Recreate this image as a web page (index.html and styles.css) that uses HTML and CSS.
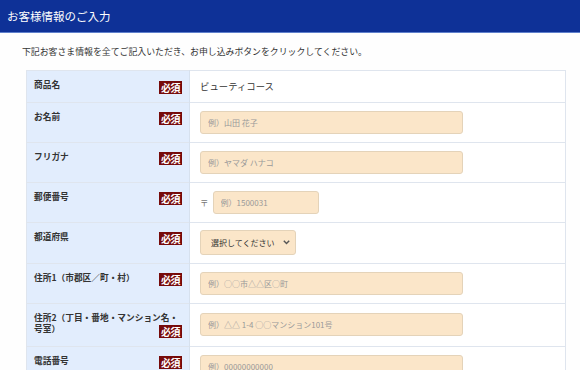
FILE: index.html
```html
<!DOCTYPE html>
<html lang="ja">
<head>
    <meta charset="UTF-8">
    <meta name="viewport" content="width=device-width, initial-scale=1.0">
    <title>お客様情報のご入力</title>
    <link rel="stylesheet" href="styles.css">
</head>
<body>
    <h1 class="page-head">お客様情報のご入力</h1>
    <p class="intro">下記お客さま情報を全てご記入いただき、お申し込みボタンをクリックしてください。</p>

    <table class="form-table">
        <tr>
            <th>商品名<span class="req">必須</span></th>
            <td class="plain">ビューティコース</td>
        </tr>
        <tr>
            <th>お名前<span class="req">必須</span></th>
            <td><input type="text" class="field" placeholder="例）山田 花子"></td>
        </tr>
        <tr>
            <th>フリガナ<span class="req">必須</span></th>
            <td><input type="text" class="field" placeholder="例）ヤマダ ハナコ"></td>
        </tr>
        <tr>
            <th>郵便番号<span class="req">必須</span></th>
            <td>
                <div class="zip-line">
                    <span class="zip-mark">〒</span>
                    <input type="text" class="field zip" placeholder="例）1500031">
                </div>
            </td>
        </tr>
        <tr>
            <th>都道府県<span class="req">必須</span></th>
            <td class="tight">
                <div class="select-wrap">
                    <select class="field pref">
                        <option>選択してください</option>
                        <option>東京都</option>
                        <option>大阪府</option>
                    </select>
                    <svg class="chevron" width="7" height="5" viewBox="0 0 7 5"><path d="M0.8 0.8 L3.5 3.6 L6.2 0.8" fill="none" stroke="#555" stroke-width="1.4"/></svg>
                </div>
            </td>
        </tr>
        <tr>
            <th>住所1（市郡区／町・村）<span class="req">必須</span></th>
            <td><input type="text" class="field" placeholder="例）○○市△△区○町"></td>
        </tr>
        <tr>
            <th>住所2（丁目・番地・マンション名・号室）<span class="req">必須</span></th>
            <td><input type="text" class="field" placeholder="例）△△ 1-4 ○○マンション101号"></td>
        </tr>
        <tr>
            <th>電話番号<span class="req">必須</span></th>
            <td><input type="text" class="field" placeholder="例）00000000000"></td>
        </tr>
    </table>
</body>
</html>
```

FILE: styles.css
```css
body {
    margin: 0;
    font-family: "Noto Sans CJK JP", "Noto Sans", sans-serif;
    background: #fefefe;
    color: #333;
}
.page-head {
    margin: 0;
    height: 32px;
    line-height: 32px;
    padding-left: 7px;
    font-size: 11.5px;
    font-weight: normal;
    color: #fff;
    background: #0e3197;
    border-bottom: 1px solid #5f80cc;
}
.intro {
    margin: 12px 0 0 22px;
    font-size: 8.9px;
    line-height: 14px;
}
.form-table {
    margin: 11px 0 0 26px;
    width: 540px;
    border-collapse: collapse;
    border: 1px solid #dfe5ee;
    font-size: 9px;
    line-height: 1;
}
.form-table tr { border-bottom: 1px solid #dfe5ee; }
.form-table th {
    width: 148px;
    padding: 8px 7px 8px 7px;
    background: #e2edfd;
    border-right: 1px solid #d7e1ee;
    text-align: left;
    vertical-align: top;
    font-size: 8.7px;
    line-height: 11.5px;
    font-weight: bold;
    color: #333;
}
.form-table td {
    padding: 8px 10px;
    vertical-align: middle;
    background: #fff;
}
.form-table td.tight { padding: 7px 10px 8px; }
.form-table td.plain {
    font-size: 9.4px;
    line-height: 14px;
    color: #333;
}
.req {
    float: right;
    width: 23px;
    height: 13px;
    margin-top: 1.5px;
    line-height: 13px;
    text-align: center;
    font-size: 10px;
    font-weight: bold;
    letter-spacing: -0.5px;
    color: #fff;
    background: #760a0a;
}
.field {
    box-sizing: border-box;
    display: block;
    width: 263px;
    height: 23px;
    padding: 0 7px;
    border: 1px solid #e4d3b9;
    border-radius: 3px;
    background: #fbe6c9;
    font-family: inherit;
    font-size: 8px;
    color: #333;
}
.field::placeholder { color: #999; }
.zip-line {
    display: flex;
    align-items: center;
}
.zip-mark {
    font-size: 8.5px;
    color: #777;
    margin-right: 4px;
}
.field.zip { width: 106px; }
.select-wrap {
    position: relative;
    width: 96px;
}
.field.pref {
    width: 96px;
    height: 25px;
    padding: 0 10px;
    appearance: none;
    -webkit-appearance: none;
    font-size: 8px;
    color: #333;
}
.chevron {
    position: absolute;
    right: 6px;
    top: 10px;
    pointer-events: none;
}
```
